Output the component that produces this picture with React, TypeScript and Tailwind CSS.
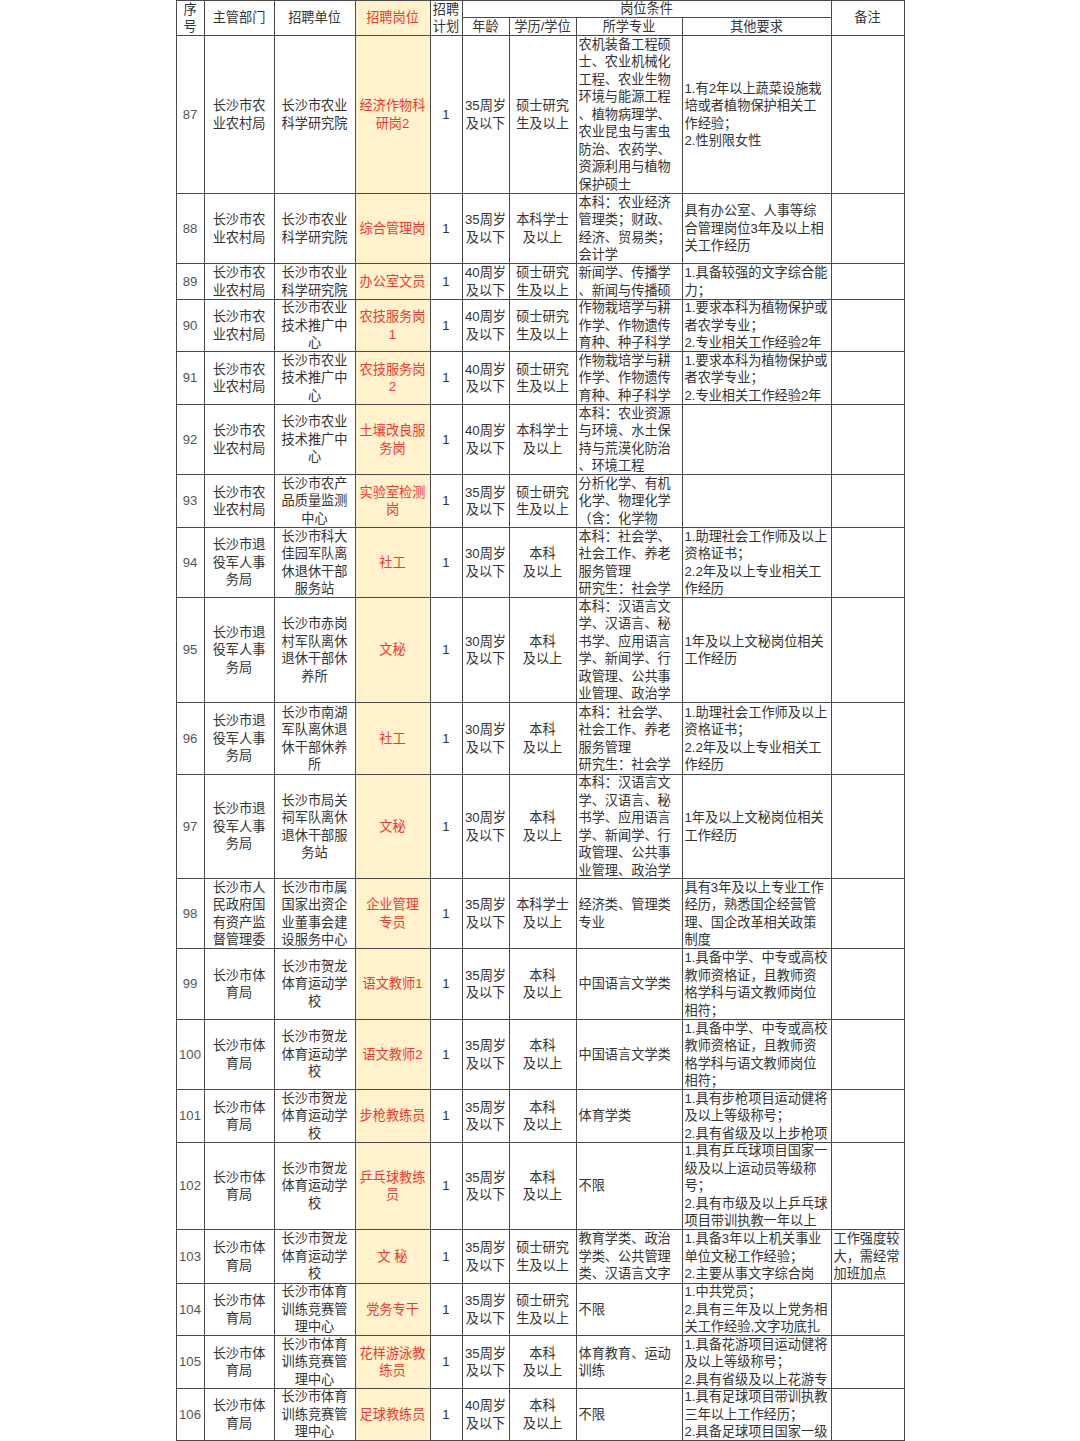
import clsx from "clsx";

type Row = {
  no: string;
  dept: string[];
  unit: string[];
  post: string[];
  age: string[];
  edu: string[];
  major: string[];
  other: string[];
  note?: string[];
};

const agri = ["长沙市农", "业农村局"];
const vet = ["长沙市退", "役军人事", "务局"];
const sport = ["长沙市体", "育局"];
const helong = ["长沙市贺龙", "体育运动学", "校"];
const train = ["长沙市体育", "训练竞赛管", "理中心"];
const master = ["硕士研究", "生及以上"];
const bachelor = ["本科", "及以上"];
const bachelorDeg = ["本科学士", "及以上"];

const socialMajor = ["本科：社会学、", "社会工作、养老", "服务管理", "研究生：社会学"];
const socialOther = ["1.助理社会工作师及以上", "资格证书；", "2.2年及以上专业相关工", "作经历"];
const secMajor = ["本科：汉语言文", "学、汉语言、秘", "书学、应用语言", "学、新闻学、行", "政管理、公共事", "业管理、政治学"];
const secOther = ["1年及以上文秘岗位相关", "工作经历"];
const teacherOther = ["1.具备中学、中专或高校", "教师资格证，且教师资", "格学科与语文教师岗位", "相符；"];
const farmMajor = ["作物栽培学与耕", "作学、作物遗传", "育种、种子科学"];
const farmOther = ["1.要求本科为植物保护或", "者农学专业；", "2.专业相关工作经验2年"];

const rows: Row[] = [
  {
    no: "87",
    dept: agri,
    unit: ["长沙市农业", "科学研究院"],
    post: ["经济作物科", "研岗2"],
    age: ["35周岁", "及以下"],
    edu: master,
    major: ["农机装备工程硕", "士、农业机械化", "工程、农业生物", "环境与能源工程", "、植物病理学、", "农业昆虫与害虫", "防治、农药学、", "资源利用与植物", "保护硕士"],
    other: ["1.有2年以上蔬菜设施栽", "培或者植物保护相关工", "作经验；", "2.性别限女性"],
  },
  {
    no: "88",
    dept: agri,
    unit: ["长沙市农业", "科学研究院"],
    post: ["综合管理岗"],
    age: ["35周岁", "及以下"],
    edu: bachelorDeg,
    major: ["本科：农业经济", "管理类；财政、", "经济、贸易类；", "会计学"],
    other: ["具有办公室、人事等综", "合管理岗位3年及以上相", "关工作经历"],
  },
  {
    no: "89",
    dept: agri,
    unit: ["长沙市农业", "科学研究院"],
    post: ["办公室文员"],
    age: ["40周岁", "及以下"],
    edu: master,
    major: ["新闻学、传播学", "、新闻与传播硕"],
    other: ["1.具备较强的文字综合能", "力；"],
  },
  {
    no: "90",
    dept: agri,
    unit: ["长沙市农业", "技术推广中", "心"],
    post: ["农技服务岗", "1"],
    age: ["40周岁", "及以下"],
    edu: master,
    major: farmMajor,
    other: farmOther,
  },
  {
    no: "91",
    dept: agri,
    unit: ["长沙市农业", "技术推广中", "心"],
    post: ["农技服务岗", "2"],
    age: ["40周岁", "及以下"],
    edu: master,
    major: farmMajor,
    other: farmOther,
  },
  {
    no: "92",
    dept: agri,
    unit: ["长沙市农业", "技术推广中", "心"],
    post: ["土壤改良服", "务岗"],
    age: ["40周岁", "及以下"],
    edu: bachelorDeg,
    major: ["本科：农业资源", "与环境、水土保", "持与荒漠化防治", "、环境工程"],
    other: [],
  },
  {
    no: "93",
    dept: agri,
    unit: ["长沙市农产", "品质量监测", "中心"],
    post: ["实验室检测", "岗"],
    age: ["35周岁", "及以下"],
    edu: master,
    major: ["分析化学、有机", "化学、物理化学", "（含：化学物"],
    other: [],
  },
  {
    no: "94",
    dept: vet,
    unit: ["长沙市科大", "佳园军队离", "休退休干部", "服务站"],
    post: ["社工"],
    age: ["30周岁", "及以下"],
    edu: bachelor,
    major: socialMajor,
    other: socialOther,
  },
  {
    no: "95",
    dept: vet,
    unit: ["长沙市赤岗", "村军队离休", "退休干部休", "养所"],
    post: ["文秘"],
    age: ["30周岁", "及以下"],
    edu: bachelor,
    major: secMajor,
    other: secOther,
  },
  {
    no: "96",
    dept: vet,
    unit: ["长沙市南湖", "军队离休退", "休干部休养", "所"],
    post: ["社工"],
    age: ["30周岁", "及以下"],
    edu: bachelor,
    major: socialMajor,
    other: socialOther,
  },
  {
    no: "97",
    dept: vet,
    unit: ["长沙市局关", "祠军队离休", "退休干部服", "务站"],
    post: ["文秘"],
    age: ["30周岁", "及以下"],
    edu: bachelor,
    major: secMajor,
    other: secOther,
  },
  {
    no: "98",
    dept: ["长沙市人", "民政府国", "有资产监", "督管理委"],
    unit: ["长沙市市属", "国家出资企", "业董事会建", "设服务中心"],
    post: ["企业管理", "专员"],
    age: ["35周岁", "及以下"],
    edu: bachelorDeg,
    major: ["经济类、管理类", "专业"],
    other: ["具有3年及以上专业工作", "经历，熟悉国企经营管", "理、国企改革相关政策", "制度"],
  },
  {
    no: "99",
    dept: sport,
    unit: helong,
    post: ["语文教师1"],
    age: ["35周岁", "及以下"],
    edu: bachelor,
    major: ["中国语言文学类"],
    other: teacherOther,
  },
  {
    no: "100",
    dept: sport,
    unit: helong,
    post: ["语文教师2"],
    age: ["35周岁", "及以下"],
    edu: bachelor,
    major: ["中国语言文学类"],
    other: teacherOther,
  },
  {
    no: "101",
    dept: sport,
    unit: helong,
    post: ["步枪教练员"],
    age: ["35周岁", "及以下"],
    edu: bachelor,
    major: ["体育学类"],
    other: ["1.具有步枪项目运动健将", "及以上等级称号；", "2.具有省级及以上步枪项"],
  },
  {
    no: "102",
    dept: sport,
    unit: helong,
    post: ["乒乓球教练", "员"],
    age: ["35周岁", "及以下"],
    edu: bachelor,
    major: ["不限"],
    other: ["1.具有乒乓球项目国家一", "级及以上运动员等级称", "号；", "2.具有市级及以上乒乓球", "项目带训执教一年以上"],
  },
  {
    no: "103",
    dept: sport,
    unit: helong,
    post: ["文 秘"],
    age: ["35周岁", "及以下"],
    edu: master,
    major: ["教育学类、政治", "学类、公共管理", "类、汉语言文字"],
    other: ["1.具备3年以上机关事业", "单位文秘工作经验；", "2.主要从事文字综合岗"],
    note: ["工作强度较", "大，需经常", "加班加点"],
  },
  {
    no: "104",
    dept: sport,
    unit: train,
    post: ["党务专干"],
    age: ["35周岁", "及以下"],
    edu: master,
    major: ["不限"],
    other: ["1.中共党员；", "2.具有三年及以上党务相", "关工作经验,文字功底扎"],
  },
  {
    no: "105",
    dept: sport,
    unit: train,
    post: ["花样游泳教", "练员"],
    age: ["35周岁", "及以下"],
    edu: bachelor,
    major: ["体育教育、运动", "训练"],
    other: ["1.具备花游项目运动健将", "及以上等级称号；", "2.具有省级及以上花游专"],
  },
  {
    no: "106",
    dept: sport,
    unit: train,
    post: ["足球教练员"],
    age: ["40周岁", "及以下"],
    edu: bachelor,
    major: ["不限"],
    other: ["1.具有足球项目带训执教", "三年以上工作经历；", "2.具备足球项目国家一级"],
  },
];

function Cell({
  lines,
  left,
  post,
  className,
}: {
  lines: string[];
  left?: boolean;
  post?: boolean;
  className?: string;
}) {
  return (
    <div
      className={clsx(
        "flex items-center overflow-hidden",
        left ? "justify-start pl-[2px] text-left" : "justify-center text-center",
        post ? "bg-[#fff2cc] text-[#f2382f]" : "bg-white",
        className
      )}
    >
      <div>
        {lines.map((l, i) => (
          <div key={i} className="whitespace-nowrap">
            {l}
          </div>
        ))}
      </div>
    </div>
  );
}

export default function App() {
  return (
    <div className="min-h-screen bg-white font-['Liberation_Sans','Noto_Sans_CJK_SC',sans-serif] text-[13.2px] leading-[17.5px] text-[#333]">
      <div className="mx-auto grid w-[729px] grid-cols-[27px_69px_80px_74px_31px_46px_66px_105px_148px_72px] grid-rows-[16px_17px_157px_69px_35px_51px_52px_69px_52px_69px_104px_71px_103px_69px_70px_69px_52px_86px_53px_51px_52px_51px] gap-px bg-[#4a4a4a] p-px">
        <Cell lines={["序", "号"]} className="row-span-2" />
        <Cell lines={["主管部门"]} className="row-span-2" />
        <Cell lines={["招聘单位"]} className="row-span-2" />
        <Cell lines={["招聘岗位"]} post className="row-span-2" />
        <Cell lines={["招聘", "计划"]} className="row-span-2" />
        <Cell lines={["岗位条件"]} className="col-span-4 leading-[16px]" />
        <Cell lines={["备注"]} className="row-span-2" />
        <Cell lines={["年龄"]} className="leading-[17px]" />
        <Cell lines={["学历/学位"]} className="leading-[17px]" />
        <Cell lines={["所学专业"]} className="leading-[17px]" />
        <Cell lines={["其他要求"]} className="leading-[17px]" />

        {rows.map((r) => (
          <div key={r.no} className="contents">
            <Cell lines={[r.no]} className="text-[#555]" />
            <Cell lines={r.dept} />
            <Cell lines={r.unit} />
            <Cell lines={r.post} post />
            <Cell lines={["1"]} />
            <Cell lines={r.age} />
            <Cell lines={r.edu} />
            <Cell lines={r.major} left />
            <Cell lines={r.other} left />
            <Cell lines={r.note ?? []} left />
          </div>
        ))}
      </div>
    </div>
  );
}
